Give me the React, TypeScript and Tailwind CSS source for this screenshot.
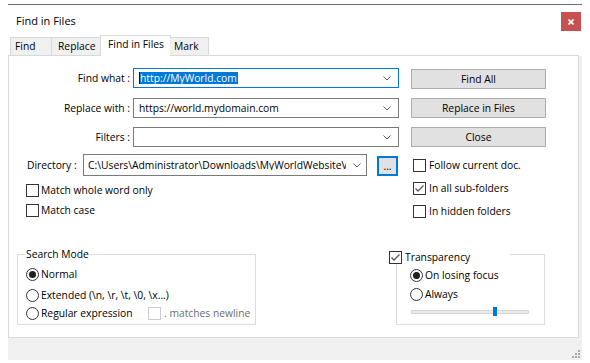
import React from "react";

const ui = "font-['Open_Sans',sans-serif] text-[10.3px] leading-none text-black";

function Chevron() {
  return (
    <svg width="8" height="5" viewBox="0 0 8 5" className="shrink-0">
      <polyline points="0.5,0.5 4,4 7.5,0.5" fill="none" stroke="#606060" strokeWidth="1" />
    </svg>
  );
}

function Check({ checked = false, disabled = false }: { checked?: boolean; disabled?: boolean }) {
  return (
    <span
      className={
        "w-[13px] h-[13px] shrink-0 flex items-center justify-center bg-white border " +
        (disabled ? "border-[#cccccc]" : "border-[#333333]")
      }
    >
      {checked && (
        <svg width="11" height="11" viewBox="0 0 11 11">
          <polyline points="1.5,5.5 4,8 9.5,2.5" fill="none" stroke="#5a5a5a" strokeWidth="1.3" />
        </svg>
      )}
    </span>
  );
}

function Radio({ on = false }: { on?: boolean }) {
  return (
    <span className="w-[13px] h-[13px] shrink-0 rounded-full border border-[#333333] bg-white flex items-center justify-center">
      {on && <span className="w-[7px] h-[7px] rounded-full bg-[#1f1f1f]" />}
    </span>
  );
}

function Button({ children, className = "" }: { children: React.ReactNode; className?: string }) {
  return (
    <div className={"flex items-center justify-center bg-[#e1e1e1] border border-[#adadad] " + className}>
      {children}
    </div>
  );
}

export default function App() {
  return (
    <div className={"w-[590px] h-[363px] bg-white overflow-hidden pt-[4px] pl-[8px] " + ui}>
      <div className="w-[574px] border-t border-[#6e6e6e] flex flex-col">
        {/* Title bar */}
        <div className="h-[30px] flex items-start justify-between">
          <div className="h-[30px] flex items-center pl-[8px] text-[11px]">Find in Files</div>
          <div className="mt-[7px] mr-[1px] w-[20px] h-[19px] bg-[#c75050] flex items-center justify-center">
            <svg width="6" height="6" viewBox="0 0 6 6">
              <line x1="0.5" y1="0.5" x2="5.5" y2="5.5" stroke="white" strokeWidth="1.6" />
              <line x1="5.5" y1="0.5" x2="0.5" y2="5.5" stroke="white" strokeWidth="1.6" />
            </svg>
          </div>
        </div>

        <div className="flex">
          <div className="w-[571px]">
            {/* Tabs */}
            <div className="h-[21px] flex items-end pl-[2px] border-b border-[#d9d9d9]">
              <div className="w-[42px] h-[18px] bg-[#f0f0f0] border border-b-0 border-[#d9d9d9] pl-[4px] flex items-center">Find</div>
              <div className="-ml-px w-[50px] h-[18px] bg-[#f0f0f0] border border-b-0 border-[#d9d9d9] pl-[6px] flex items-center">Replace</div>
              <div className="-ml-px -mb-px w-[71px] h-[21px] bg-white border border-b-0 border-[#d9d9d9] pl-[7px] pb-[3px] flex items-center">Find in Files</div>
              <div className="-ml-px w-[39px] h-[18px] bg-[#f0f0f0] border border-b-0 border-l-0 border-[#d9d9d9] pl-[4px] flex items-center">Mark</div>
            </div>

            {/* Panel */}
            <div className="h-[282px] border-x border-b border-[#d9d9d9] bg-white pt-[12px]">
              <div className="flex items-start h-[20px]">
                <div className="w-[121px] h-[20px] flex items-center justify-end">Find what :</div>
                <div className="ml-[3px] w-[266px] h-[20px] border border-[#0078d7] bg-white flex items-center pl-[5px] pr-[7px]">
                  <span className="w-px h-[12px] bg-black" />
                  <span className="bg-[#0078d7] text-white h-[12px] flex items-center pr-[1px]">http://MyWorld.com</span>
                  <span className="flex-1" />
                  <Chevron />
                </div>
                <Button className="ml-[12px] mt-[1px] w-[135px] h-[20px]">Find All</Button>
              </div>

              <div className="mt-[10px] flex items-start h-[20px]">
                <div className="w-[121px] h-[20px] flex items-center justify-end">Replace with :</div>
                <div className="ml-[3px] w-[266px] h-[20px] border border-[#7a7a7a] bg-white flex items-center pl-[5px] pr-[7px]">
                  <span className="flex-1">https://world.mydomain.com</span>
                  <Chevron />
                </div>
                <Button className="ml-[12px] w-[135px] h-[20px]">Replace in Files</Button>
              </div>

              <div className="mt-[9px] flex items-start h-[20px]">
                <div className="w-[121px] h-[20px] flex items-center justify-end">Filters :</div>
                <div className="ml-[3px] w-[266px] h-[20px] border border-[#7a7a7a] bg-white flex items-center justify-end pr-[7px]">
                  <Chevron />
                </div>
                <Button className="ml-[12px] w-[135px] h-[20px]">Close</Button>
              </div>

              {/* Directory */}
              <div className="mt-[7px] h-[22px] flex items-center pl-[18px]">
                <div className="w-[56px]">Directory :</div>
                <div className="w-[284px] h-[22px] border border-[#7a7a7a] bg-white flex items-center pl-[4px] pr-[5px]">
                  <span className="flex-1 overflow-hidden whitespace-nowrap mr-[7px]">C:\Users\Administrator\Downloads\MyWorldWebsiteV(</span>
                  <Chevron />
                </div>
                <div className="ml-[10px] mt-[2px] w-[21px] h-[20px] bg-[#e1e1e1] border-2 border-[#0078d7] flex items-end justify-center pb-[3px]">...</div>
                <div className="ml-[15px] flex items-center gap-[3px]">
                  <Check />
                  <span>Follow current doc.</span>
                </div>
              </div>

              {/* Options */}
              <div className="mt-[1px] flex">
                <div className="w-[404px] pl-[17px] pt-[3px]">
                  <div className="h-[20px] flex items-center gap-[2px]">
                    <Check />
                    <span>Match whole word only</span>
                  </div>
                  <div className="h-[20px] flex items-center gap-[2px]">
                    <Check />
                    <span>Match case</span>
                  </div>
                </div>
                <div>
                  <div className="h-[23px] flex items-center gap-[3px]">
                    <Check checked />
                    <span>In all sub-folders</span>
                  </div>
                  <div className="h-[23px] flex items-center gap-[3px]">
                    <Check />
                    <span>In hidden folders</span>
                  </div>
                </div>
              </div>

              {/* Groups */}
              <div className="mt-[31px] flex pl-[8px]">
                <div className="relative w-[239px] h-[71px] border border-[#dcdcdc] pl-[8px] pt-[9px]">
                  <div className="absolute left-[7px] -top-[8px] bg-white px-[1px] h-[15px] flex items-center">Search Mode</div>
                  <div className="h-[20px] flex items-center gap-[2px]">
                    <Radio on />
                    <span>Normal</span>
                  </div>
                  <div className="h-[22px] flex items-center gap-[2px]">
                    <Radio />
                    <span>Extended (\n, \r, \t, \0, \x...)</span>
                  </div>
                  <div className="h-[14px] flex items-center">
                    <div className="w-[122px] flex items-center gap-[2px]">
                      <Radio />
                      <span>Regular expression</span>
                    </div>
                    <div className="flex items-center gap-[3px] text-[#6d6d6d]">
                      <Check disabled />
                      <span>. matches newline</span>
                    </div>
                  </div>
                </div>

                <div className="relative ml-[140px] w-[149px] h-[71px] border border-[#dcdcdc] pl-[13px] pt-[10px]">
                  <div className="absolute -left-[8px] -top-[4px] w-[121px] h-[13px] bg-white flex items-center gap-[3px]">
                    <Check checked />
                    <span>Transparency</span>
                  </div>
                  <div className="h-[20px] flex items-center gap-[2px]">
                    <Radio on />
                    <span>On losing focus</span>
                  </div>
                  <div className="h-[18px] flex items-center gap-[2px]">
                    <Radio />
                    <span>Always</span>
                  </div>
                  <div className="h-[17px] flex items-center pl-[1px]">
                    <div className="relative w-[118px] h-[4px] bg-[#e7eaea] border border-[#d6d6d6]">
                      <div className="absolute left-[81px] -top-[4px] w-[4px] h-[9px] bg-[#0078d7]" />
                    </div>
                  </div>
                </div>
              </div>
            </div>
          </div>
          <div className="w-[3px] mt-[21px] bg-[#f0f0f0]" />
        </div>

        {/* Bottom strip with grip */}
        <div className="h-[22px] bg-[#f0f0f0] flex items-end justify-end pr-[2px] pb-[2px]">
          <svg width="8" height="8" viewBox="0 0 8 8">
            <rect x="6" y="0" width="2" height="2" fill="#a8a8a8" />
            <rect x="3" y="3" width="2" height="2" fill="#a8a8a8" />
            <rect x="6" y="3" width="2" height="2" fill="#a8a8a8" />
            <rect x="0" y="6" width="2" height="2" fill="#a8a8a8" />
            <rect x="3" y="6" width="2" height="2" fill="#a8a8a8" />
            <rect x="6" y="6" width="2" height="2" fill="#a8a8a8" />
          </svg>
        </div>
      </div>
    </div>
  );
}
